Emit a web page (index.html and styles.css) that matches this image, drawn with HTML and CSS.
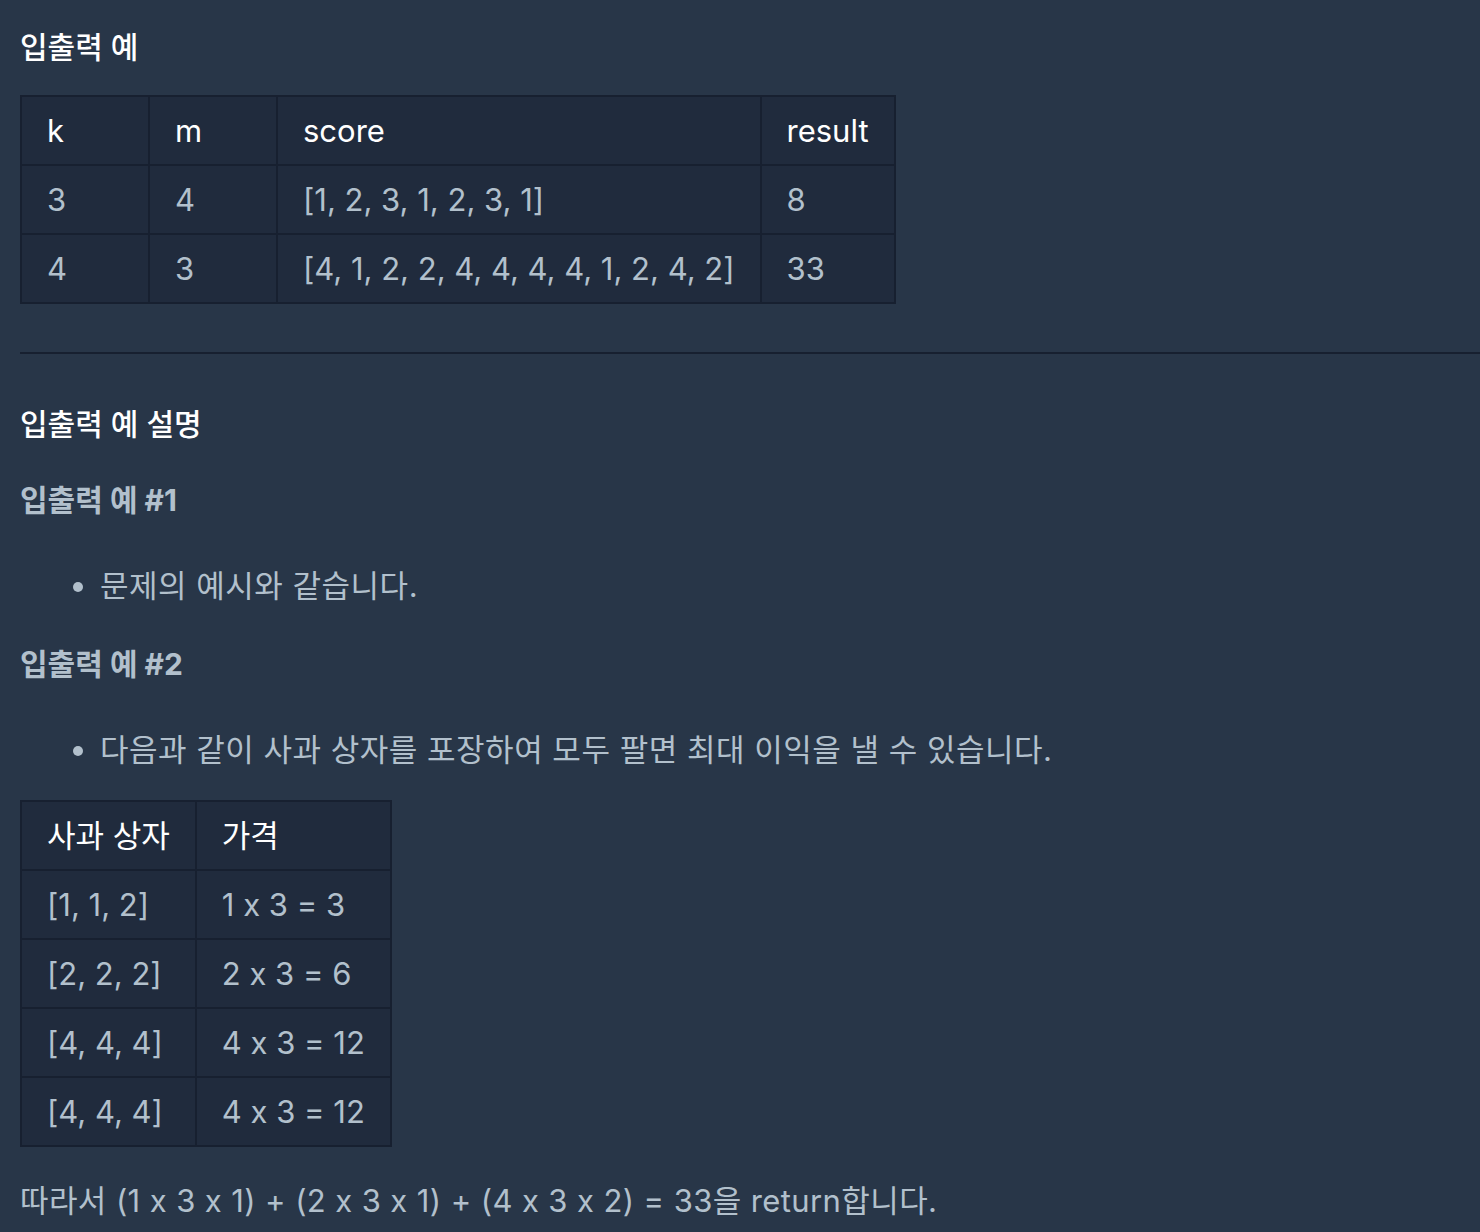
FILE: index.html
```html
<!DOCTYPE html>
<html lang="ko">

<head>
    <meta charset="UTF-8">
    <meta name="viewport" content="width=device-width, initial-scale=1.0">
    <title>입출력 예</title>
    <link rel="stylesheet" href="styles.css">
</head>

<body>
    <div class="guide">
        <h5 class="section-title">입출력 예</h5>

        <table class="example-table example-main">
            <thead>
                <tr>
                    <th>k</th>
                    <th>m</th>
                    <th>score</th>
                    <th>result</th>
                </tr>
            </thead>
            <tbody>
                <tr>
                    <td>3</td>
                    <td>4</td>
                    <td>[1, 2, 3, 1, 2, 3, 1]</td>
                    <td>8</td>
                </tr>
                <tr>
                    <td>4</td>
                    <td>3</td>
                    <td>[4, 1, 2, 2, 4, 4, 4, 4, 1, 2, 4, 2]</td>
                    <td>33</td>
                </tr>
            </tbody>
        </table>

        <hr class="divider">

        <h5 class="section-title title-desc">입출력 예 설명</h5>

        <h6 class="case-title case-first">입출력 예 #1</h6>
        <ul class="case-list case-list-first">
            <li>문제의 예시와 같습니다.</li>
        </ul>

        <h6 class="case-title case-second">입출력 예 #2</h6>
        <ul class="case-list case-list-second">
            <li>다음과 같이 사과 상자를 포장하여 모두 팔면 최대 이익을 낼 수 있습니다.</li>
        </ul>

        <table class="example-table example-box">
            <thead>
                <tr>
                    <th>사과 상자</th>
                    <th>가격</th>
                </tr>
            </thead>
            <tbody>
                <tr>
                    <td>[1, 1, 2]</td>
                    <td>1 x 3 = 3</td>
                </tr>
                <tr>
                    <td>[2, 2, 2]</td>
                    <td>2 x 3 = 6</td>
                </tr>
                <tr>
                    <td>[4, 4, 4]</td>
                    <td>4 x 3 = 12</td>
                </tr>
                <tr>
                    <td>[4, 4, 4]</td>
                    <td>4 x 3 = 12</td>
                </tr>
            </tbody>
        </table>

        <p class="summary">따라서 (1 x 3 x 1) + (2 x 3 x 1) + (4 x 3 x 2) = 33을 return합니다.</p>
    </div>
</body>

</html>
```

FILE: styles.css
```css
body {
    margin: 0;
    background-color: #283648;
    font-family: Inter, "Noto Sans CJK KR", sans-serif;
    font-feature-settings: "calt" 0;
    color: #b2c0cc;
    overflow: hidden;
}

.guide {
    padding: 27px 0 0 20px;
    font-size: 31px;
    line-height: 45px;
}

.section-title {
    margin: 0;
    font-size: 30px;
    line-height: 40px;
    font-weight: 500;
    color: #ffffff;
}

.title-desc {
    margin-top: 50px;
}

.case-title {
    margin: 0;
    font-size: 30px;
    line-height: 40px;
    font-weight: 700;
    color: #b2c0cc;
}

.case-first {
    margin-top: 36px;
}

.case-second {
    margin-top: 36px;
}

.case-list {
    margin: 43px 0 0 0;
    padding-left: 80px;
}

.case-list li {
    line-height: 45px;
    letter-spacing: 0.5px;
}

.example-table {
    border-collapse: collapse;
    background-color: #202b3d;
    border: 2px solid #172030;
}

.example-main {
    margin-top: 28px;
}

.example-box {
    margin-top: 28px;
}

.example-table th,
.example-table td {
    border: 2px solid #172030;
    padding: 11px 25px;
    min-width: 76px;
    text-align: left;
    white-space: nowrap;
}

.example-table th {
    font-weight: 400;
    color: #ffffff;
}

.example-table td {
    color: #b2c0cc;
}

.divider {
    margin: 48px 0 0 0;
    border: none;
    border-top: 2px solid #172030;
    width: 1480px;
}

.summary {
    margin: 31px 0 0 0;
    letter-spacing: 0.4px;
}
```
